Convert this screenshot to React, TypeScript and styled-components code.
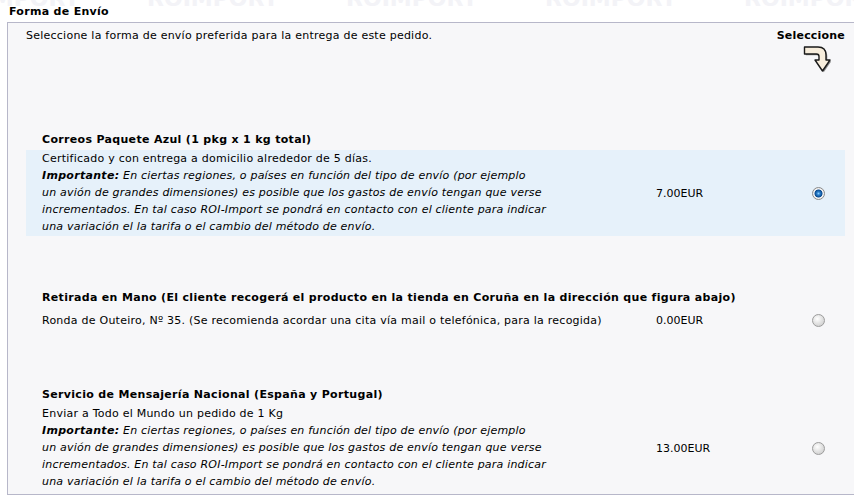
import React from "react";
import styled, { createGlobalStyle } from "styled-components";

const GlobalStyle = createGlobalStyle`
  html, body {
    margin: 0;
    padding: 0;
    background: #ffffff;
    overflow: hidden;
  }
  body {
    font-family: "DejaVu Sans", Verdana, sans-serif;
    font-size: 11px;
    letter-spacing: 0.24px;
    color: #000000;
  }
  b {
    letter-spacing: 0.3px;
  }
`;

const Page = styled.div`
  position: relative;
  width: 870px;
  padding-top: 3px;
`;

const Watermark = styled.div`
  position: absolute;
  top: -12px;
  left: -52px;
  display: flex;
  gap: 79px;
  pointer-events: none;
`;

const Mark = styled.span`
  width: 120px;
  font-size: 22px;
  line-height: 22px;
  font-weight: bold;
  letter-spacing: 0;
  color: #f3f3f7;
  white-space: nowrap;
`;

const Title = styled.h1`
  position: relative;
  margin: 0 0 2px 9px;
  font-size: 11px;
  line-height: 17px;
  font-weight: bold;
  letter-spacing: 0.3px;
`;

const Box = styled.div`
  position: relative;
  margin-left: 7px;
  border: 1px solid #b7b7c9;
  background: #f7f7f9;
  padding: 4px 24px 3px 18px;
`;

const IntroRow = styled.div`
  display: flex;
  justify-content: space-between;
  align-items: flex-start;
  margin-bottom: 58px;
  line-height: 17px;
`;

const Pick = styled.div`
  display: flex;
  flex-direction: column;
  align-items: flex-end;
  font-weight: bold;
  letter-spacing: 0.2px;
`;

const ArrowIcon = styled.svg`
  margin: 1px 14px 0 0;
  display: block;
`;

const Section = styled.div`
  & + & {
    margin-top: 53px;
  }
`;

const Heading = styled.div`
  padding-left: 16px;
  margin-bottom: 2px;
  font-weight: bold;
  letter-spacing: 0.32px;
  line-height: 17px;
  white-space: nowrap;
`;

const Row = styled.div<{ $selected?: boolean }>`
  display: grid;
  grid-template-columns: 630px 137px 50px;
  align-items: center;
  min-height: 25px;
  background: ${(p) => (p.$selected ? "#e6f1fa" : "transparent")};
`;

const Desc = styled.div`
  padding: 0 0 1px 16px;
  line-height: 17px;
  white-space: nowrap;
`;

const Note = styled.i`
  font-style: italic;
  letter-spacing: 0.2px;
`;

const Price = styled.div`
  line-height: 17px;
  letter-spacing: 0;
`;

const RadioCell = styled.div`
  display: flex;
  justify-content: center;
`;

const Radio = styled.input`
  appearance: none;
  margin: 0;
  width: 13px;
  height: 13px;
  border-radius: 50%;
  border: 1px solid #9c9c9c;
  box-sizing: border-box;
  background: radial-gradient(circle at 40% 35%, #ffffff 0, #e4e4e4 45%, #c6c6c6 100%);

  &:checked {
    border-color: #8a8a8a;
    background: radial-gradient(
      circle at 50% 50%,
      #8fd0ff 0,
      #2a7fcc 1.6px,
      #0b4b8f 3.6px,
      #f4f4f4 4.4px,
      #dedede 100%
    );
  }
`;

const Arrow = () => (
  <ArrowIcon width="28" height="28" viewBox="0 0 28 28">
    <path
      d="M1.5,2 H15 C21,2 23,5 23,10 V15 H27 L19.5,26 L12,15 H16 V11.5 C16,9.8 15,9 13.5,9 H1.5 Z"
      fill="#8c8c8c"
      transform="translate(1.3,1.3)"
    />
    <path
      d="M1.5,2 H15 C21,2 23,5 23,10 V15 H27 L19.5,26 L12,15 H16 V11.5 C16,9.8 15,9 13.5,9 H1.5 Z"
      fill="#f7eddc"
      stroke="#1a1a1a"
      strokeWidth="1.4"
      strokeLinejoin="round"
    />
  </ArrowIcon>
);

const Important = () => (
  <Note>
    <b>Importante:</b> En ciertas regiones, o países en función del tipo de envío (por ejemplo
    <br />
    un avión de grandes dimensiones) es posible que los gastos de envío tengan que verse
    <br />
    incrementados. En tal caso ROI-Import se pondrá en contacto con el cliente para indicar
    <br />
    una variación el la tarifa o el cambio del método de envío.
  </Note>
);

interface Option {
  title: string;
  lead: string;
  note: boolean;
  price: string;
  selected: boolean;
}

const options: Option[] = [
  {
    title: "Correos Paquete Azul (1 pkg x 1 kg total)",
    lead: "Certificado y con entrega a domicilio alrededor de 5 días.",
    note: true,
    price: "7.00EUR",
    selected: true,
  },
  {
    title:
      "Retirada en Mano (El cliente recogerá el producto en la tienda en Coruña en la dirección que figura abajo)",
    lead: "Ronda de Outeiro, Nº 35. (Se recomienda acordar una cita vía mail o telefónica, para la recogida)",
    note: false,
    price: "0.00EUR",
    selected: false,
  },
  {
    title: "Servicio de Mensajería Nacional (España y Portugal)",
    lead: "Enviar a Todo el Mundo un pedido de 1 Kg",
    note: true,
    price: "13.00EUR",
    selected: false,
  },
];

const App = () => {
  return (
    <Page>
      <GlobalStyle />
      <Watermark aria-hidden="true">
        {[0, 1, 2, 3, 4, 5].map((i) => (
          <Mark key={i}>ROIMPORT</Mark>
        ))}
      </Watermark>
      <Title>Forma de Envío</Title>
      <Box>
        <IntroRow>
          <span>Seleccione la forma de envío preferida para la entrega de este pedido.</span>
          <Pick>
            <span>Seleccione</span>
            <Arrow />
          </Pick>
        </IntroRow>
        {options.map((o) => (
          <Section key={o.title}>
            <Heading>{o.title}</Heading>
            <Row $selected={o.selected}>
              <Desc>
                {o.lead}
                {o.note && (
                  <>
                    <br />
                    <Important />
                  </>
                )}
              </Desc>
              <Price>{o.price}</Price>
              <RadioCell>
                <Radio type="radio" name="shipping" defaultChecked={o.selected} />
              </RadioCell>
            </Row>
          </Section>
        ))}
      </Box>
    </Page>
  );
};

export default App;
